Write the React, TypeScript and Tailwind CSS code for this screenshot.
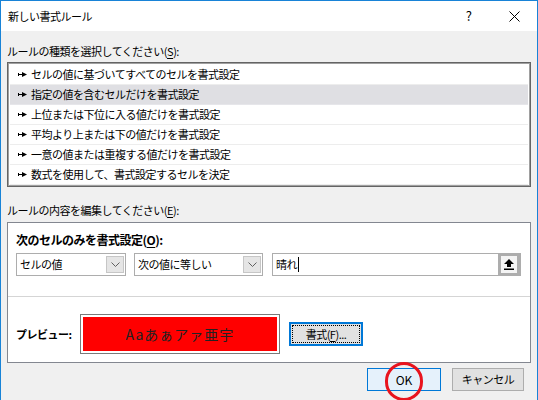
import type { ReactNode } from 'react'

const ruleTypes = [
  'セルの値に基づいてすべてのセルを書式設定',
  '指定の値を含むセルだけを書式設定',
  '上位または下位に入る値だけを書式設定',
  '平均より上または下の値だけを書式設定',
  '一意の値または重複する値だけを書式設定',
  '数式を使用して、書式設定するセルを決定',
]

const font = { fontFamily: '"Noto Sans CJK JP", "Noto Sans", sans-serif' }

function Bullet() {
  return (
    <svg width="9" height="7" viewBox="0 0 9 7" className="shrink-0">
      <rect x="0" y="2" width="1" height="3" fill="#000" />
      <rect x="0" y="3" width="5" height="1" fill="#000" />
      <polygon points="4,1 9,3.5 4,6" fill="#000" />
    </svg>
  )
}

function Chevron() {
  return (
    <svg width="9" height="5" viewBox="0 0 9 5">
      <path d="M0.5 0.5 L4.5 4.5 L8.5 0.5" fill="none" stroke="#606060" strokeWidth="1" />
    </svg>
  )
}

function Dropdown({ value, width }: { readonly value: string; readonly width: string }) {
  return (
    <div className={`flex h-[23px] items-center border border-[#adadad] bg-white pl-[3px] pr-[1px] ${width}`}>
      <span className="flex-1 leading-none text-black">{value}</span>
      <div className="flex h-[17px] w-[18px] items-center justify-center border border-[#c6c6c6] bg-[#e5e5e5]">
        <Chevron />
      </div>
    </div>
  )
}

function Underlined({ children }: { readonly children: ReactNode }) {
  return <span className="underline underline-offset-2">{children}</span>
}

export default function App() {
  return (
    <div
      className="relative flex h-[400px] w-[538px] flex-col overflow-hidden border-x border-t border-[#1883d7] bg-[#f0f0f0] text-[11px] tracking-[-0.5px] text-black"
      style={font}
    >
      <header className="flex h-[30px] shrink-0 items-center bg-white pl-[7px]">
        <span className="flex-1">新しい書式ルール</span>
        <span className="mr-[37px] text-[13px] tracking-normal">?</span>
        <svg width="11" height="11" viewBox="0 0 11 11" className="mr-[17px]">
          <path d="M0.5 0.5 L10.5 10.5 M10.5 0.5 L0.5 10.5" stroke="#000" strokeWidth="1" />
        </svg>
      </header>

      <div className="flex flex-1 flex-col px-[6px]">
        <p className="mt-[12px] h-[16px] leading-[16px]">
          ルールの種類を選択してください(<Underlined>S</Underlined>):
        </p>

        <div className="mt-[3px] flex h-[125px] flex-col border border-[#646464] bg-white p-[1px] shadow-[inset_0_0_0_1px_#a0a0a0]">
          <div className="flex flex-col px-[1px] pt-[1px]">
            {ruleTypes.map((rule, i) => (
              <div
                key={rule}
                className={`flex h-[20px] items-center gap-[4px] border-b pl-[8px] ${
                  i === 1 ? 'border-[#e6e6ea] bg-[#dfdfe3]' : 'border-[#ededed]'
                }`}
              >
                <Bullet />
                <span>{rule}</span>
              </div>
            ))}
          </div>
        </div>

        <p className="mt-[15px] h-[16px] leading-[16px]">
          ルールの内容を編集してください(<Underlined>E</Underlined>):
        </p>

        <div className="mt-[4px] flex h-[141px] flex-col border border-[#838790] bg-white">
          <div className="flex h-[74px] shrink-0 flex-col border-b border-[#d5d5d5] pl-[8px] pr-[9px] pt-[9px]">
            <p className="h-[16px] text-[12px] font-bold leading-[16px]">
              次のセルのみを書式設定(<Underlined>O</Underlined>):
            </p>
            <div className="mt-[5px] flex items-center">
              <Dropdown value="セルの値" width="w-[110px]" />
              <div className="w-[8px]" />
              <Dropdown value="次の値に等しい" width="w-[129px]" />
              <div className="w-[9px]" />
              <div className="flex h-[23px] flex-1 items-center border border-[#adadad] bg-white">
                <span className="flex flex-1 items-center pl-[3px]">
                  晴れ<span className="ml-[1px] inline-block h-[15px] w-[1px] bg-black" />
                </span>
                <div className="flex h-[23px] w-[22px] items-center justify-center border-[3px] border-[#adadad] bg-[#f4f4f4]">
                  <svg width="10" height="11" viewBox="0 0 10 11">
                    <polygon points="5,0 10,5 7,5 7,8 3,8 3,5 0,5" fill="#000" />
                    <rect x="0" y="9.5" width="10" height="1.5" fill="#000" />
                  </svg>
                </div>
              </div>
            </div>
          </div>

          <div className="flex items-center pl-[8px] pt-[17px]">
            <span className="w-[64px] whitespace-nowrap font-bold">プレビュー:</span>
            <div className="flex h-[40px] w-[200px] items-center justify-center border border-[#7a7a7a] bg-white p-[2px]">
              <div className="flex h-full w-full items-center justify-center bg-[#ff0000] text-[14px] tracking-[1px] text-[#222]">
                Aaあぁアァ亜宇
              </div>
            </div>
            <div className="ml-[9px] flex h-[24px] w-[74px] items-center justify-center border-2 border-[#0078d7] bg-[#e1e1e1] p-[1px]">
              <div className="flex h-full w-full items-center justify-center border border-dotted border-black">
                書式(<Underlined>F</Underlined>)...
              </div>
            </div>
          </div>
        </div>

        <div className="mt-[5px] flex justify-end gap-[11px] pr-[7px]">
          <button className="flex h-[23px] w-[74px] items-center justify-center border border-[#0078d7] bg-[#e5f1fb] text-[12px] tracking-normal">
            OK
          </button>
          <button className="flex h-[23px] w-[72px] items-center justify-center border border-[#adadad] bg-[#e1e1e1]">
            キャンセル
          </button>
        </div>
      </div>

      <div className="pointer-events-none absolute left-[384px] top-[361px] h-[39px] w-[38px] rounded-full border-[3px] border-[#e8141e]" />
    </div>
  )
}
